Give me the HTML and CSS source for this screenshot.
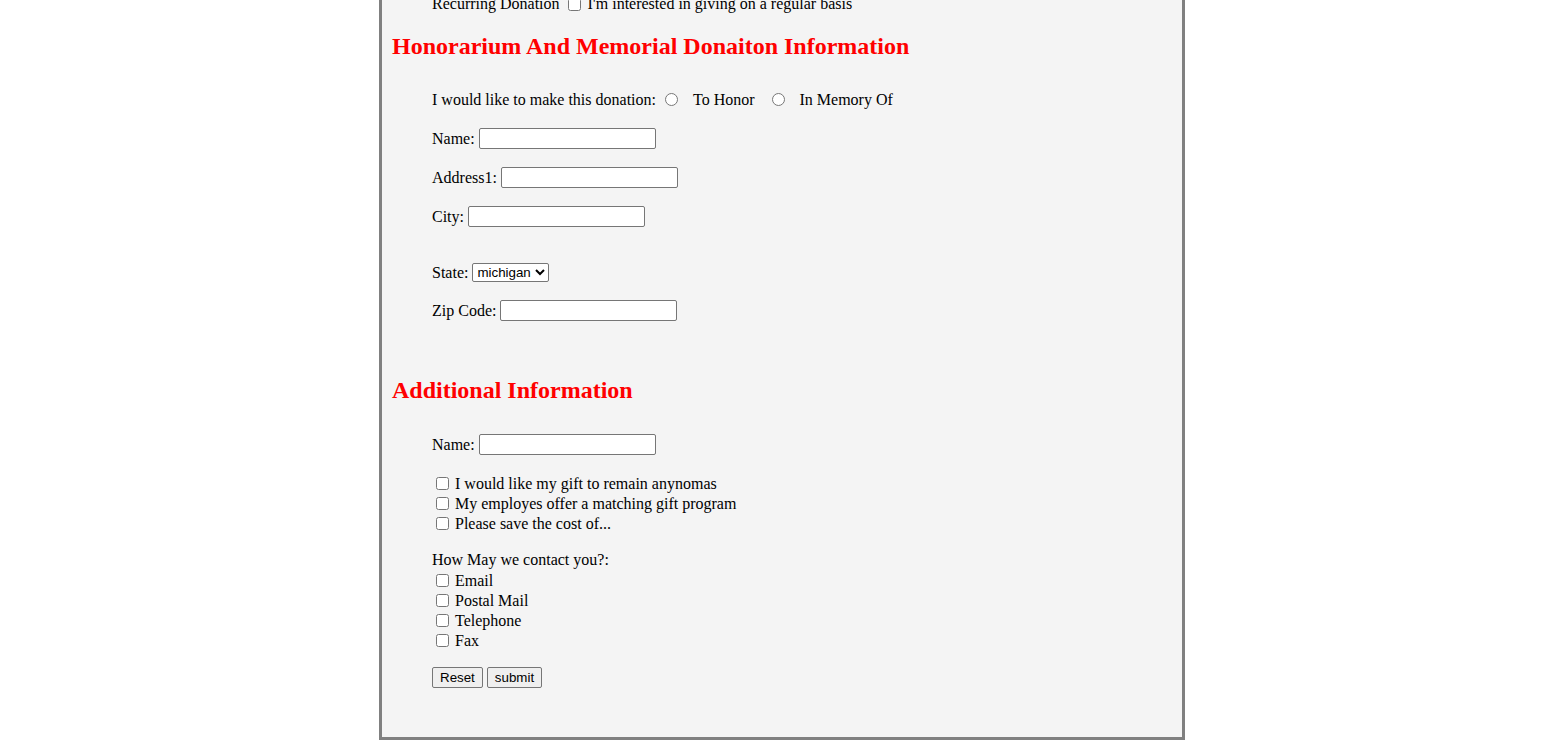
FILE: index.html
```html
<!DOCTYPE html>
<html lang="en">
<head>
<meta charset="utf-8">
<title>Donation Form</title>
<link rel="stylesheet" href="styles.css">
</head>
<body>
<form class="card">
  <div class="section">
    <div class="line recurring">
      <span>Recurring Donation</span>
      <input type="checkbox" class="cb cb-inline">
      <span class="after-cb">I'm interested in giving on a regular basis</span>
    </div>
  </div>

  <h2 class="heading first">Honorarium And Memorial Donaiton Information</h2>

  <div class="section">
    <div class="line radios">
      <span>I would like to make this donation:</span>
      <input type="radio" name="kind" class="rb rb-first">
      <span class="rb-label first-label">To Honor</span>
      <input type="radio" name="kind" class="rb rb-second">
      <span class="rb-label second-label">In Memory Of</span>
    </div>
    <div class="field gap-std"><span>Name:</span><input type="text" class="txt"></div>
    <div class="field gap-std"><span>Address1:</span><input type="text" class="txt"></div>
    <div class="field gap-std"><span>City:</span><input type="text" class="txt"></div>
    <div class="field select-field gap-wide"><span>State:</span>
      <select class="sel">
        <option>michigan</option>
        <option>ohio</option>
        <option>indiana</option>
      </select>
    </div>
    <div class="field gap-std"><span>Zip Code:</span><input type="text" class="txt"></div>
  </div>

  <h2 class="heading second">Additional Information</h2>

  <div class="section">
    <div class="field"><span>Name:</span><input type="text" class="txt"></div>
    <div class="list gap-std">
      <div class="line"><input type="checkbox" class="cb"><span class="after-cb">I would like my gift to remain anynomas</span></div>
      <div class="line"><input type="checkbox" class="cb"><span class="after-cb">My employes offer a matching gift program</span></div>
      <div class="line"><input type="checkbox" class="cb"><span class="after-cb">Please save the cost of...</span></div>
    </div>
    <div class="list gap-list">
      <div class="line">How May we contact you?:</div>
      <div class="line"><input type="checkbox" class="cb"><span class="after-cb">Email</span></div>
      <div class="line"><input type="checkbox" class="cb"><span class="after-cb">Postal Mail</span></div>
      <div class="line"><input type="checkbox" class="cb"><span class="after-cb">Telephone</span></div>
      <div class="line"><input type="checkbox" class="cb"><span class="after-cb">Fax</span></div>
    </div>
    <div class="buttons gap-list">
      <button type="reset" class="btn">Reset</button>
      <button type="submit" class="btn">submit</button>
    </div>
  </div>
</form>
</body>
</html>
```

FILE: styles.css
```css
html, body {
  margin: 0;
  padding: 0;
  background: #ffffff;
}

body {
  font-family: "Liberation Serif", "Times New Roman", serif;
  font-size: 16px;
  color: #000000;
  overflow: hidden;
}

.card {
  width: 800px;
  margin: -6px 0 0 calc(50% - 404.5px);
  padding: 0 0 49px;
  background: #f4f4f4;
  border: 3px solid #808080;
  border-top: none;
  display: flex;
  flex-direction: column;
}

.section {
  margin-left: 50px;
  display: flex;
  flex-direction: column;
}

.heading {
  margin: 0 0 0 10px;
  font-size: 24px;
  line-height: 28px;
  font-weight: bold;
  color: #ff0000;
}

.heading.first {
  margin-top: 18px;
  margin-bottom: 30px;
}

.heading.second {
  margin-top: 55px;
  margin-bottom: 30px;
}

.line {
  display: flex;
  align-items: center;
  height: 20px;
  line-height: 20px;
  white-space: nowrap;
}

.list .line span {
  position: relative;
  top: 1px;
}

.field {
  display: flex;
  align-items: center;
  gap: 4px;
  height: 21px;
  line-height: 20px;
  white-space: nowrap;
}

.select-field {
  height: 19px;
}

.gap-std {
  margin-top: 18px;
}

.gap-wide {
  margin-top: 36px;
}

.gap-list {
  margin-top: 17px;
}

.txt {
  box-sizing: border-box;
  width: 177px;
  height: 21px;
  margin: 0;
  padding: 1px 2px;
  border: 1px solid #767676;
  border-radius: 2px;
  background: #ffffff;
  font-family: "Liberation Sans", Arial, sans-serif;
  font-size: 13.33px;
}

.sel {
  box-sizing: border-box;
  width: 77px;
  height: 19px;
  margin: 0;
  font-family: "Liberation Sans", Arial, sans-serif;
  font-size: 13.33px;
  color: #000000;
  background: #ffffff;
  border: 1px solid #767676;
  border-radius: 2px;
}

.cb {
  width: 13px;
  height: 13px;
  margin: 0 0 0 4px;
  flex: none;
}

.cb-inline {
  margin-left: 8px;
}

.after-cb {
  margin-left: 6px;
}

.recurring .after-cb {
  margin-left: 7px;
}

.rb {
  width: 13px;
  height: 13px;
  margin: 0;
  flex: none;
  position: relative;
  top: -1px;
}

.rb-first {
  margin-left: 9px;
}

.rb-second {
  margin-left: 17px;
}

.first-label {
  margin-left: 15px;
}

.second-label {
  margin-left: 15px;
}

.buttons {
  display: flex;
  gap: 4px;
  height: 21px;
}

.btn {
  box-sizing: border-box;
  height: 21px;
  margin: 0;
  padding: 1px 7px;
  font-family: "Liberation Sans", Arial, sans-serif;
  font-size: 13.33px;
  color: #000000;
  background: #efefef;
  border: 1px solid #767676;
  border-radius: 2px;
}
```
